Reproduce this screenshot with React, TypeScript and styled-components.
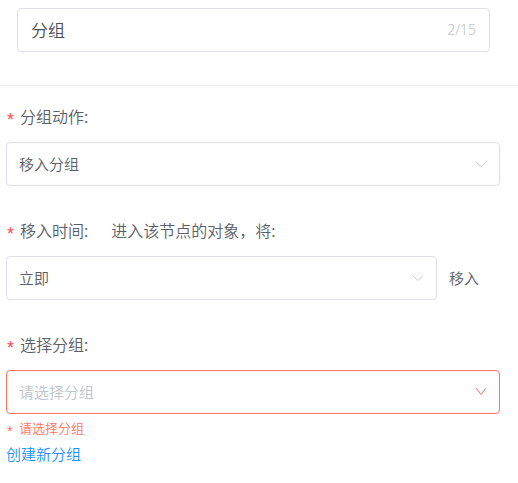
import React from 'react';
import styled, { createGlobalStyle } from 'styled-components';

const GlobalStyle = createGlobalStyle`
  html, body {
    margin: 0;
    padding: 0;
    background: #fff;
  }
  body {
    font-family: "Noto Sans CJK SC", "Noto Sans", sans-serif;
    font-weight: 350;
    color: #5a5e66;
  }
`;

const Page = styled.div`
  width: 518px;
`;

const Header = styled.div`
  padding: 8px 28px 33px 17px;
  border-bottom: 1px solid #ebeef5;
`;

const NameInput = styled.div`
  display: flex;
  align-items: center;
  justify-content: space-between;
  box-sizing: border-box;
  height: 44px;
  padding: 0 13px;
  border: 1px solid #dcdfe6;
  border-radius: 4px;
`;

const NameText = styled.span`
  font-size: 17px;
  line-height: 20px;
  color: #4a4e55;
`;

const Counter = styled.span`
  font-size: 14px;
  line-height: 20px;
  color: #bfc2c8;
  font-family: "Noto Sans", sans-serif;
`;

const Form = styled.div`
  padding: 18px 18px 0 6px;
`;

const FormItem = styled.div`
  margin-bottom: 32px;

  &:last-child {
    margin-bottom: 0;
  }
`;

const Label = styled.div`
  display: flex;
  align-items: center;
  height: 24px;
  margin-bottom: 14px;
  font-size: 16px;
  line-height: 24px;
  color: #5a5e66;
`;

const Star = styled.span<{ $small?: boolean }>`
  display: inline-block;
  width: ${(p) => (p.$small ? 12 : 13)}px;
  padding-left: 1px;
  font-family: "Liberation Sans", sans-serif;
  font-size: ${(p) => (p.$small ? 15 : 18)}px;
  color: ${(p) => (p.$small ? '#ff7563' : '#ff4d4f')};
  transform: translateY(${(p) => (p.$small ? 3 : 4)}px);
`;

const Hint = styled.span`
  margin-left: 23px;
`;

const Row = styled.div`
  display: flex;
  align-items: center;
  gap: 12px;
`;

const SelectBox = styled.div<{ $error?: boolean; $width?: number }>`
  display: flex;
  align-items: center;
  justify-content: space-between;
  box-sizing: border-box;
  width: ${(p) => (p.$width ? `${p.$width}px` : '100%')};
  height: 44px;
  padding: 0 12px 0 12px;
  border: 1px solid ${(p) => (p.$error ? '#ff7563' : '#dcdfe6')};
  border-radius: 4px;
  background: #fff;
`;

const SelectValue = styled.span<{ $placeholder?: boolean }>`
  font-size: 15px;
  line-height: 20px;
  color: ${(p) => (p.$placeholder ? '#c0c4cc' : '#5a5e66')};
`;

const Suffix = styled.span`
  font-size: 15px;
  line-height: 20px;
  color: #5a5e66;
`;

const ErrorText = styled.div`
  display: flex;
  align-items: center;
  margin-top: 6px;
  font-size: 13px;
  line-height: 16px;
  color: #ff7563;
`;

const CreateLink = styled.a`
  display: block;
  margin-top: 8px;
  font-size: 15px;
  line-height: 20px;
  color: #1890ff;
  text-decoration: none;
  cursor: pointer;
`;

function Chevron({ error }: { error?: boolean }) {
  return (
    <svg width="12" height="12" viewBox="0 0 12 12" fill="none">
      <path
        d={error ? 'M1.5 2.5 L6 8.5 L10.5 2.5' : 'M1 4 L6 8.5 L11 4'}
        stroke={error ? '#ff7563' : '#c8cbd1'}
        strokeWidth="1"
        strokeLinecap="round"
        strokeLinejoin="round"
      />
    </svg>
  );
}

export default function App() {
  return (
    <Page>
      <GlobalStyle />
      <Header>
        <NameInput>
          <NameText>分组</NameText>
          <Counter>2/15</Counter>
        </NameInput>
      </Header>
      <Form>
        <FormItem>
          <Label>
            <Star>*</Star>分组动作:
          </Label>
          <SelectBox>
            <SelectValue>移入分组</SelectValue>
            <Chevron />
          </SelectBox>
        </FormItem>
        <FormItem>
          <Label>
            <Star>*</Star>移入时间:<Hint>进入该节点的对象，将:</Hint>
          </Label>
          <Row>
            <SelectBox $width={431}>
              <SelectValue>立即</SelectValue>
              <Chevron />
            </SelectBox>
            <Suffix>移入</Suffix>
          </Row>
        </FormItem>
        <FormItem>
          <Label>
            <Star>*</Star>选择分组:
          </Label>
          <SelectBox $error>
            <SelectValue $placeholder>请选择分组</SelectValue>
            <Chevron error />
          </SelectBox>
          <ErrorText>
            <Star $small>*</Star>请选择分组
          </ErrorText>
          <CreateLink>创建新分组</CreateLink>
        </FormItem>
      </Form>
    </Page>
  );
}
